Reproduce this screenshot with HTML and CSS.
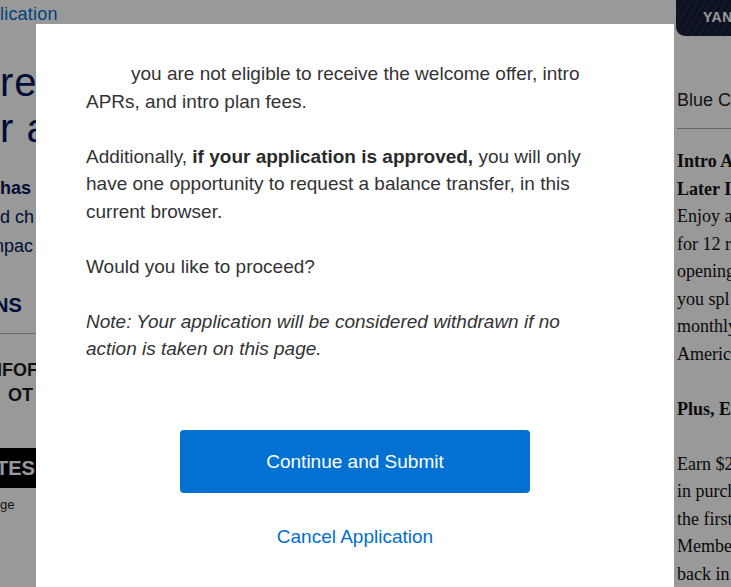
FILE: index.html
```html
<!DOCTYPE html>
<html>
<head>
<meta charset="utf-8">
<link rel="stylesheet" href="styles.css">
</head>
<body>
<div class="page">
  <div class="left">
    <div class="crumb">lication</div>
    <div class="hero">re</div>
    <div class="hero">r a</div>
    <div class="lead"><b>has</b></div>
    <div class="lead">d ch</div>
    <div class="lead cut">npac</div>
    <div class="sect cut">NS</div>
    <div class="rule"></div>
    <div class="info">IFOF</div>
    <div class="info ind">OT</div>
    <div class="bar">TES</div>
    <div class="small">ge</div>
  </div>
  <div class="right">
    <div class="badge">YAN</div>
    <div class="card-title">Blue C</div>
    <div class="rule rrule"></div>
    <div class="serif">
      <p><b>Intro A</b><br><b>Later I</b><br>Enjoy a<br>for 12 r<br>opening<br>you spl<br>monthly<br>Americ</p>
      <p><b>Plus, E</b></p>
      <p>Earn $2<br>in purch<br>the first<br>Membe<br>back in</p>
    </div>
  </div>
</div>
<div class="overlay"></div>
<div class="modal">
  <div class="content">
    <p class="first">you are not eligible to receive the welcome offer, intro APRs, and intro plan fees.</p>
    <p>Additionally, <b>if your application is approved,</b> you will only have one opportunity to request a balance transfer, in this current browser.</p>
    <p>Would you like to proceed?</p>
    <p><i>Note: Your application will be considered withdrawn if no action is taken on this page.</i></p>
  </div>
  <div class="actions">
    <button class="primary">Continue and Submit</button>
    <a class="cancel" href="#">Cancel Application</a>
  </div>
</div>
</body>
</html>
```

FILE: styles.css
```css
html, body {
  margin: 0;
  padding: 0;
  width: 731px;
  height: 587px;
  overflow: hidden;
  background: #fff;
  font-family: "Liberation Sans", Arial, sans-serif;
}
.page {
  display: grid;
  grid-template-columns: 677px 200px;
  width: 877px;
}
.left {
  overflow: hidden;
  width: 120px;
  color: #00175a;
}
.crumb {
  color: #006fcf;
  font-size: 18px;
  line-height: 28px;
  font-weight: 500;
  letter-spacing: 0.2px;
}
.hero {
  font-size: 40px;
  font-weight: 300;
  line-height: 46px;
  letter-spacing: 1px;
}
.crumb + .hero { margin-top: 31px; }
.lead {
  font-size: 18px;
  line-height: 29px;
}
.crumb + .hero + .hero + .lead { margin-top: 23px; }
.lead b { font-weight: 700; }
.cut { margin-left: -6px; }
.sect {
  font-size: 20px;
  font-weight: 700;
  margin-top: 32px;
  line-height: 24px;
}
.rule {
  height: 1px;
  background: #b0b3b8;
  margin-top: 16px;
}
.info {
  font-size: 18px;
  font-weight: 700;
  color: #1a1a1a;
  line-height: 25px;
  margin-left: -3px;
}
.rule + .info { margin-top: 24px; }
.info.ind { margin-left: 8px; }
.bar {
  margin-top: 40px;
  background: #000;
  color: #fff;
  font-size: 20px;
  font-weight: 700;
  height: 40px;
  line-height: 40px;
  margin-left: -4px;
}
.small {
  font-size: 13px;
  color: #222;
  margin-top: 9px;
}
.right {
  color: #222;
}
.badge {
  height: 36px;
  margin-left: -1px;
  background: repeating-linear-gradient(120deg, #1d2540 0 3px, #151b33 3px 6px);
  border-bottom-left-radius: 9px;
  color: #fff;
  font-size: 14px;
  font-weight: 700;
  line-height: 34px;
  padding-left: 27px;
  letter-spacing: 0.5px;
}
.card-title {
  font-size: 18px;
  margin-top: 50px;
  line-height: 28px;
}
.rrule {
  margin-top: 14px;
  background: #a8a8a8;
}
.serif {
  font-family: "Liberation Serif", "Times New Roman", serif;
  font-size: 18px;
  line-height: 27.5px;
  color: #111;
  padding-top: 19px;
}
.serif p { margin: 0 0 27.5px; }
.overlay {
  position: fixed;
  inset: 0;
  background: rgba(0, 0, 0, 0.4);
}
.modal {
  position: fixed;
  left: 36px;
  top: 24px;
  width: 638px;
  bottom: -40px;
  background: #fff;
  display: flex;
  flex-direction: column;
  align-items: center;
}
.content {
  width: 520px;
  padding: 36px 32px 0 50px;
  align-self: flex-start;
  color: #333;
  font-size: 19px;
  line-height: 27.5px;
}
.content p { margin: 0 0 27.5px; }
.content .first { text-indent: 45px; }
.content b { color: #2a2a2a; }
.actions {
  display: flex;
  flex-direction: column;
  align-items: center;
  margin-top: 40px;
  gap: 32px;
}
.primary {
  width: 350px;
  height: 63px;
  background: #0271d1;
  border: 0;
  border-radius: 4px;
  color: #fff;
  font-family: "Liberation Sans", Arial, sans-serif;
  font-size: 19px;
  padding: 0;
}
.cancel {
  color: #006fcf;
  font-size: 19px;
  text-decoration: none;
  line-height: 23px;
}
```
